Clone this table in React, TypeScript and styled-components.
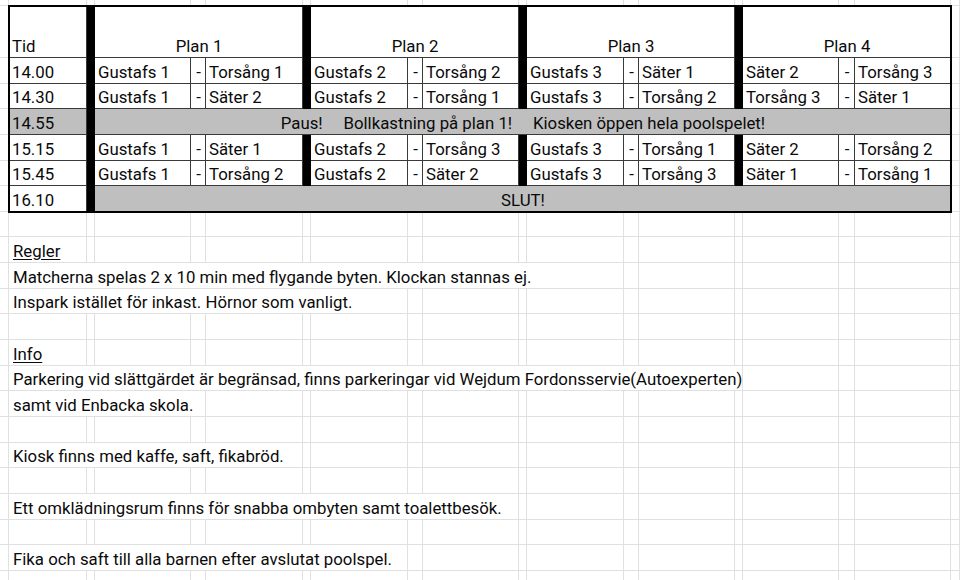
import * as React from "react";
import styled, { createGlobalStyle } from "styled-components";

const GRID = "#e0e0e0";
const RULE = "#3a3a3a";
const SHADE = "#bfbfbf";
const ROW_H = "25.65px";

// column widths: partial col, then A..Q, the rest fills
const COLS = [9, 78, 8, 96, 15, 97, 8, 97, 15, 96, 8, 97, 15, 96, 8, 96, 16, 96];
const sheetTrack = COLS.map((w) => `${w}px`).join(" ") + " 1fr";
const tableTrack = COLS.slice(1).map((w) => `${w}px`).join(" ");

const GlobalStyle = createGlobalStyle`
  html, body {
    margin: 0;
    background: #fff;
  }
  body {
    font-family: Roboto, "Liberation Sans", sans-serif;
    color: #0a0a0a;
    overflow: hidden;
  }
`;

const Sheet = styled.div`
  display: grid;
  grid-template-columns: ${sheetTrack};
  grid-template-rows: 6px 52px;
  grid-auto-rows: ${ROW_H};
  width: 960px;
  height: 580px;
  overflow: hidden;
  font-size: 16.8px;
`;

const Blank = styled.div`
  box-sizing: border-box;
  border-right: 1px solid ${GRID};
  border-bottom: 1px solid ${GRID};
`;

const Note = styled.div<{ $span: number; $underline?: boolean }>`
  grid-column: span ${(p) => p.$span};
  box-sizing: border-box;
  border-right: 1px solid ${GRID};
  border-bottom: 1px solid ${GRID};
  display: flex;
  align-items: flex-end;
  padding: 0 0 1px 4px;
  white-space: nowrap;
  text-decoration: ${(p) => (p.$underline ? "underline" : "none")};
  text-underline-offset: 2px;
`;

const Table = styled.div`
  grid-column: 2 / 19;
  grid-row: 2 / 9;
  display: grid;
  grid-template-columns: ${tableTrack};
  grid-template-rows: 52px repeat(6, ${ROW_H});
  outline: 2px solid #000;
  outline-offset: -1px;
  position: relative;
  z-index: 1;
`;

const Cell = styled.div<{ $span?: number; $center?: boolean; $shade?: boolean }>`
  grid-column: span ${(p) => p.$span ?? 1};
  box-sizing: border-box;
  border-right: 1px solid ${RULE};
  border-bottom: 1px solid ${RULE};
  background: ${(p) => (p.$shade ? SHADE : "#fff")};
  display: flex;
  align-items: flex-end;
  justify-content: ${(p) => (p.$center ? "center" : "flex-start")};
  padding: 0 2px 1px 3px;
  white-space: pre;
  overflow: hidden;
`;

const Bar = styled.div`
  background: #000;
`;

const plans = ["Plan 1", "Plan 2", "Plan 3", "Plan 4"];

type Match = [string, string];
type Slot =
  | { time: string; games: Match[] }
  | { time: string; banner: string; shadeTime?: boolean };

const slots: Slot[] = [
  { time: "14.00", games: [["Gustafs 1", "Torsång 1"], ["Gustafs 2", "Torsång 2"], ["Gustafs 3", "Säter 1"], ["Säter 2", "Torsång 3"]] },
  { time: "14.30", games: [["Gustafs 1", "Säter 2"], ["Gustafs 2", "Torsång 1"], ["Gustafs 3", "Torsång 2"], ["Torsång 3", "Säter 1"]] },
  { time: "14.55", banner: "Paus!     Bollkastning på plan 1!     Kiosken öppen hela poolspelet!", shadeTime: true },
  { time: "15.15", games: [["Gustafs 1", "Säter 1"], ["Gustafs 2", "Torsång 3"], ["Gustafs 3", "Torsång 1"], ["Säter 2", "Torsång 2"]] },
  { time: "15.45", games: [["Gustafs 1", "Torsång 2"], ["Gustafs 2", "Säter 2"], ["Gustafs 3", "Torsång 3"], ["Säter 1", "Torsång 1"]] },
  { time: "16.10", banner: "SLUT!" },
];

// text rows below the table; span = how many columns the text runs over
const notes: { text?: string; span?: number; underline?: boolean }[] = [
  {},
  { text: "Regler", span: 1, underline: true },
  { text: "Matcherna spelas 2 x 10 min med flygande byten. Klockan stannas ej.", span: 11 },
  { text: "Inspark istället för inkast. Hörnor som vanligt.", span: 7 },
  {},
  { text: "Info", span: 1, underline: true },
  { text: "Parkering vid slättgärdet är begränsad, finns parkeringar vid Wejdum Fordonsservie(Autoexperten)", span: 14 },
  { text: "samt vid Enbacka skola.", span: 4 },
  {},
  { text: "Kiosk finns med kaffe, saft, fikabröd.", span: 5 },
  {},
  { text: "Ett omklädningsrum finns för snabba ombyten samt toalettbesök.", span: 9 },
  {},
  { text: "Fika och saft till alla barnen efter avslutat poolspel.", span: 7 },
  {},
];

const blanks = (n: number, key: string) =>
  Array.from({ length: n }, (_, i) => <Blank key={`${key}-${i}`} />);

const Schedule = () => (
  <Table>
    <Cell>Tid</Cell>
    <Bar />
    {plans.map((p, i) => (
      <React.Fragment key={p}>
        <Cell $span={3} $center>
          {p}
        </Cell>
        {i < 3 && <Bar />}
      </React.Fragment>
    ))}
    {slots.map((s) => (
      <React.Fragment key={s.time}>
        <Cell $shade={"banner" in s && !!s.shadeTime}>{s.time}</Cell>
        <Bar />
        {"banner" in s ? (
          <Cell $span={15} $center $shade>
            {s.banner}
          </Cell>
        ) : (
          s.games.map(([home, away], i) => (
            <React.Fragment key={i}>
              <Cell>{home}</Cell>
              <Cell $center>-</Cell>
              <Cell>{away}</Cell>
              {i < 3 && <Bar />}
            </React.Fragment>
          ))
        )}
      </React.Fragment>
    ))}
  </Table>
);

export default function App() {
  return (
    <>
      <GlobalStyle />
      <Sheet>
        <Schedule />
        {blanks(19, "top")}
        {blanks(14, "side")}
        {notes.map((n, r) => (
          <React.Fragment key={r}>
            <Blank />
            {n.text ? (
              <>
                <Note $span={n.span!} $underline={n.underline}>
                  {n.text}
                </Note>
                {blanks(18 - n.span!, `n${r}`)}
              </>
            ) : (
              blanks(18, `n${r}`)
            )}
          </React.Fragment>
        ))}
      </Sheet>
    </>
  );
}
